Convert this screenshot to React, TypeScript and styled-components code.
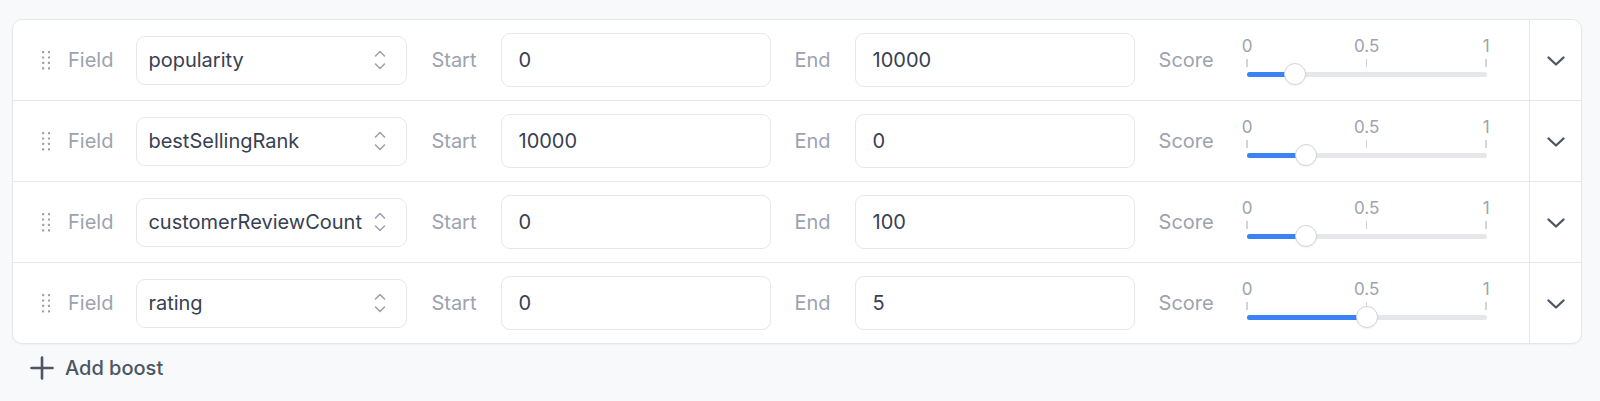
import React from "react"
import styled, { createGlobalStyle } from "styled-components"

const GlobalStyle = createGlobalStyle`
  body {
    margin: 0;
    background: #f8f9fb;
    font-family: Inter, "Noto Sans", sans-serif;
  }
`

type Boost = {
  field: string
  start: string
  end: string
  score: number
}

const boosts: Boost[] = [
  { field: "popularity", start: "0", end: "10000", score: 0.2 },
  { field: "bestSellingRank", start: "10000", end: "0", score: 0.245 },
  { field: "customerReviewCount", start: "0", end: "100", score: 0.245 },
  { field: "rating", start: "0", end: "5", score: 0.5 },
]

const DragHandle = () => (
  <HandleIcon width="8" height="20" viewBox="0 0 8 20">
    {[0, 1, 2, 3].map((r) =>
      [0, 1].map((c) => (
        <rect key={`${r}-${c}`} x={c * 6} y={1 + r * 5.4} width="2.2" height="2.2" rx="0.4" fill="#9ca3af" />
      ))
    )}
  </HandleIcon>
)

const UpDown = () => (
  <SelectIcon width="14" height="22" viewBox="0 0 14 22" fill="none">
    <path d="M2.5 7L7 2.5L11.5 7" stroke="#9ca3af" strokeWidth="1.6" strokeLinecap="round" strokeLinejoin="round" />
    <path d="M2.5 15L7 19.5L11.5 15" stroke="#9ca3af" strokeWidth="1.6" strokeLinecap="round" strokeLinejoin="round" />
  </SelectIcon>
)

const ChevronDown = () => (
  <svg width="18" height="10" viewBox="0 0 18 10" fill="none">
    <path d="M1.5 1.5L9 8.5L16.5 1.5" stroke="#4b5563" strokeWidth="2.3" strokeLinecap="round" strokeLinejoin="round" />
  </svg>
)

const Plus = () => (
  <svg width="24" height="24" viewBox="0 0 24 24" fill="none">
    <path d="M12 1.5V22.5M1.5 12H22.5" stroke="#4b5563" strokeWidth="2.6" strokeLinecap="round" />
  </svg>
)

const ScoreSlider: React.FC<{ value: number }> = ({ value }) => (
  <SliderBox>
    <Scale>
      {["0", "0.5", "1"].map((t) => (
        <Tick key={t}>
          <TickLabel>{t}</TickLabel>
          <TickLine />
        </Tick>
      ))}
    </Scale>
    <Track>
      <Fill style={{ width: `${value * 100}%` }} />
      <Thumb style={{ left: `${value * 100}%` }} />
    </Track>
  </SliderBox>
)

const BoostRow: React.FC<{ boost: Boost }> = ({ boost }) => (
  <Row>
    <Fields>
      <DragHandle />
      <Label>Field</Label>
      <Select>
        <SelectText>{boost.field}</SelectText>
        <UpDown />
      </Select>
      <Label>Start</Label>
      <Input $width={270}>{boost.start}</Input>
      <Label>End</Label>
      <Input $width={280}>{boost.end}</Input>
      <Label>Score</Label>
      <ScoreSlider value={boost.score} />
    </Fields>
    <Toggle>
      <ChevronDown />
    </Toggle>
  </Row>
)

export default function App() {
  return (
    <Page>
      <GlobalStyle />
      <Card>
        {boosts.map((b) => (
          <BoostRow key={b.field} boost={b} />
        ))}
      </Card>
      <AddButton>
        <Plus />
        Add boost
      </AddButton>
    </Page>
  )
}

const Page = styled.div`
  padding: 19px 18px 0 12px;
  min-height: 401px;
  box-sizing: border-box;
`

const Card = styled.div`
  background: #fff;
  border: 1px solid #e5e7eb;
  border-radius: 10px;
  box-shadow: 0 1px 2px rgba(17, 24, 39, 0.04);
  overflow: hidden;
`

const Row = styled.div`
  display: flex;
  height: 80px;
  border-bottom: 1px solid #e5e7eb;
  &:last-child {
    border-bottom: none;
  }
`

const Fields = styled.div`
  flex: 1;
  display: flex;
  align-items: center;
  gap: 24px;
  padding-left: 29px;
`

const HandleIcon = styled.svg`
  flex-shrink: 0;
  margin-right: -6px;
`

const Label = styled.span`
  font-size: 20px;
  color: #9ca3af;
  flex-shrink: 0;
`

const Select = styled.div`
  width: 271px;
  height: 49px;
  box-sizing: border-box;
  border: 1px solid #e5e7eb;
  border-radius: 9px;
  display: flex;
  align-items: center;
  justify-content: space-between;
  padding: 0 19px 0 11px;
  flex-shrink: 0;
  margin-left: -1px;
`

const SelectText = styled.span`
  font-size: 20px;
  color: #374151;
`

const SelectIcon = styled.svg`
  flex-shrink: 0;
`

const Input = styled.div<{ $width: number }>`
  width: ${(p) => p.$width}px;
  height: 54px;
  box-sizing: border-box;
  border: 1px solid #e5e7eb;
  border-radius: 9px;
  display: flex;
  align-items: center;
  padding: 0 17px;
  font-size: 20px;
  color: #374151;
  flex-shrink: 0;
`

const SliderBox = styled.div`
  width: 240px;
  margin-left: 9px;
  display: flex;
  flex-direction: column;
  padding-bottom: 6px;
`

const Scale = styled.div`
  display: flex;
  justify-content: space-between;
  height: 28px;
`

const Tick = styled.div`
  width: 1px;
  display: flex;
  flex-direction: column;
  align-items: center;
`

const TickLabel = styled.span`
  font-size: 17px;
  line-height: 16px;
  color: #9ca3af;
  white-space: nowrap;
`

const TickLine = styled.div`
  width: 1.5px;
  height: 8px;
  margin-top: 5px;
  background: #d1d5db;
  flex-shrink: 0;
`

const Track = styled.div`
  position: relative;
  height: 5px;
  margin-top: 6px;
  border-radius: 3px;
  background: #e5e7eb;
`

const Fill = styled.div`
  position: absolute;
  left: 0;
  top: 0;
  bottom: 0;
  border-radius: 3px;
  background: #3b82f6;
`

const Thumb = styled.div`
  position: absolute;
  top: 50%;
  width: 22px;
  height: 22px;
  box-sizing: border-box;
  border-radius: 50%;
  background: #fff;
  border: 1px solid #d1d5db;
  box-shadow: 0 1px 2px rgba(0, 0, 0, 0.06);
  transform: translate(-50%, -50%);
`

const Toggle = styled.div`
  width: 52px;
  border-left: 1px solid #e5e7eb;
  display: flex;
  align-items: center;
  justify-content: center;
  padding-top: 2px;
  box-sizing: border-box;
`

const AddButton = styled.div`
  display: flex;
  align-items: center;
  gap: 11px;
  margin: 12px 0 0 18px;
  font-size: 20px;
  font-weight: 500;
  color: #4b5563;
`
